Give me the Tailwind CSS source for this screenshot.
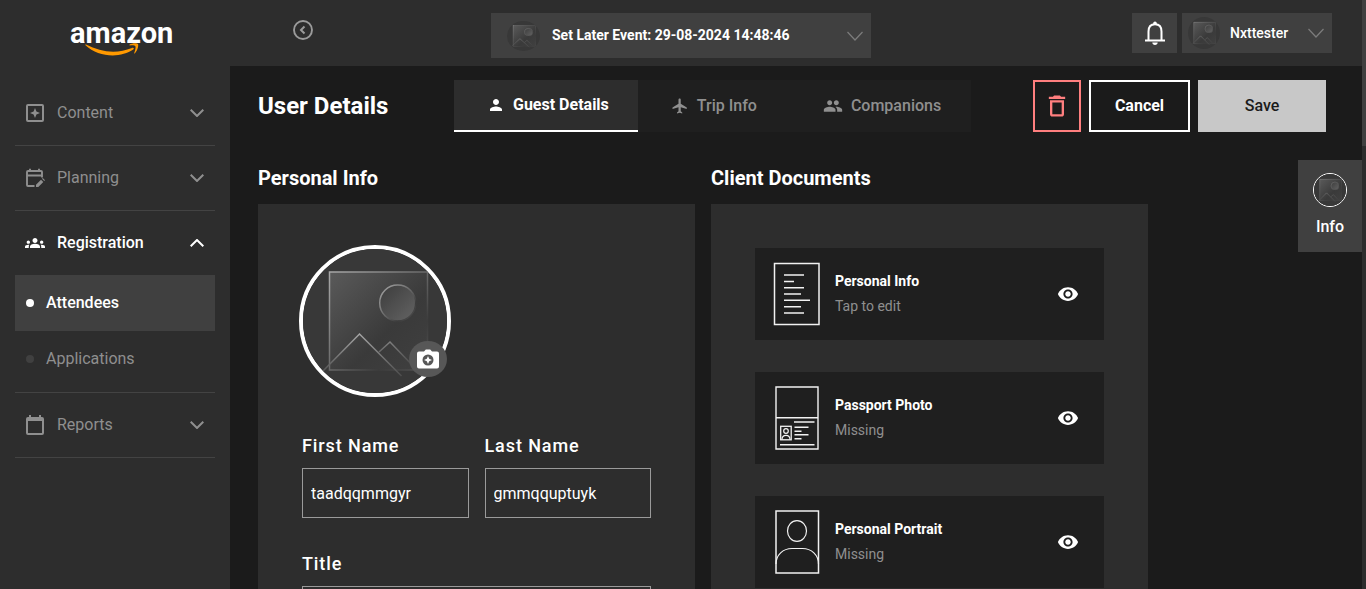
<!DOCTYPE html>
<html lang="en">
<head>
<meta charset="utf-8">
<meta name="viewport" content="width=device-width, initial-scale=1">
<title>User Details</title>
<script src="https://cdn.jsdelivr.net/npm/@tailwindcss/browser@4"></script>
</head>
<body class="bg-[#1b1b1b] font-['Roboto',sans-serif] text-base text-white">

<svg class="absolute size-0" aria-hidden="true">
  <defs>
    <linearGradient id="frame" x1="0" y1="0" x2="1" y2="1"><stop offset="0" stop-color="#5a5a5a"/><stop offset=".6" stop-color="#3a3a3a"/><stop offset="1" stop-color="#404040"/></linearGradient>
    <linearGradient id="edge" x1="0" y1="0" x2="1" y2="1"><stop offset="0" stop-color="#a8a8a8"/><stop offset=".5" stop-color="#686868"/><stop offset=".75" stop-color="#3c3c3c"/><stop offset="1" stop-color="#555"/></linearGradient>
    <linearGradient id="sun" x1="0" y1="0" x2="1" y2="1"><stop offset="0" stop-color="#3c3c3c"/><stop offset="1" stop-color="#646464"/></linearGradient>
    <linearGradient id="peak" gradientUnits="userSpaceOnUse" x1="0" y1="84" x2="0" y2="128"><stop offset="0" stop-color="#a8a8a8"/><stop offset="1" stop-color="#4a4a4a"/></linearGradient>
    <linearGradient id="peak2" gradientUnits="userSpaceOnUse" x1="0" y1="92" x2="0" y2="120"><stop offset="0" stop-color="#808080"/><stop offset="1" stop-color="#404040"/></linearGradient>
  </defs>
  <symbol id="placeholder" viewBox="0 0 144 144">
    <rect width="144" height="144" fill="#383838"/>
    <rect x="26.500" y="23" width="98" height="98" fill="url(#frame)" stroke="url(#edge)" stroke-width="1.500"/>
    <circle cx="94.700" cy="54" r="18" fill="url(#sun)" stroke="url(#edge)" stroke-width="1.500"/>
    <path d="M20 122 56.500 85 98.500 127" fill="none" stroke="url(#peak)" stroke-width="1.500"/>
    <path d="M76 103 87 93 112 119" fill="none" stroke="url(#peak2)" stroke-width="1.500"/>
  </symbol>
  <symbol id="chev" viewBox="0 0 14 8"><path d="M.7.7 7 7l6.300-6.300" fill="none" stroke="currentColor" stroke-width="2"/></symbol>
  <symbol id="thin" viewBox="0 0 16 10"><path d="M.5 1 8 9l7.500-8" fill="none" stroke="currentColor" stroke-width="1.200"/></symbol>
  <symbol id="eye" viewBox="0 0 24 24"><path fill="currentColor" d="M12 4.500C7 4.500 2.730 7.610 1 12c1.730 4.390 6 7.500 11 7.500s9.270-3.110 11-7.500c-1.730-4.390-6-7.500-11-7.500zM12 17c-2.760 0-5-2.240-5-5s2.240-5 5-5 5 2.240 5 5-2.240 5-5 5zm0-8c-1.660 0-3 1.340-3 3s1.340 3 3 3 3-1.340 3-3-1.340-3-3-3z"/></symbol>
</svg>

<div class="flex h-screen overflow-hidden">
  <div class="relative flex min-w-0 flex-1 flex-col">

    <header class="grid h-[66px] shrink-0 grid-cols-[1fr_380px_1fr] items-start bg-[#2d2d2d] pt-[13px]">
      <div class="flex items-start">
        <a href="#" class="flex w-[230px] shrink-0 pt-[10px] pl-[71px]" aria-label="amazon">
          <svg class="h-[34px] w-[102px] overflow-visible" viewBox="0 0 102 34">
            <text x="-1" y="20" font-family="'Roboto',sans-serif" font-weight="700" font-size="29" fill="#fff">amazon</text>
            <g fill="#ff9900">
              <path d="M14.200 22C13.900 21.500 14.500 21.200 15 21.500C30 29.500 46 31 61 25C62.500 24.300 63.500 25.500 62.300 26.500C50 35 28 35 14.200 22Z"/>
              <path d="M58.300 21.800C61 20 66 19.800 67 21C67.800 22.300 66.500 28 63.800 30.400C63.200 30.600 63 30.400 63.200 30C64 27.800 65 24.500 64.400 23.200C63.800 22 60.500 22.200 58.800 22.400Z"/>
            </g>
          </svg>
        </a>
        <button type="button" class="mt-[7px] ml-[63px] text-[#9a9a9a]" aria-label="Collapse menu">
          <svg class="size-5" viewBox="0 0 20 20" fill="none" stroke="currentColor"><circle cx="10" cy="10" r="9" stroke-width="1.900"/><path d="M11.500 6.500 8 10l3.500 3.500" stroke-width="2"/></svg>
        </button>
      </div>

      <div class="flex h-[45px] items-center bg-[#404040] pr-2 pl-4">
        <svg class="h-[30px] w-[33px] shrink-0 rounded-[50%]" preserveAspectRatio="none" viewBox="0 0 144 144"><use href="#placeholder" width="144" height="144"/></svg>
        <select aria-label="Event" class="ml-3 min-w-0 flex-1 appearance-none bg-transparent pb-px text-sm font-bold text-white">
          <option>Set Later Event: 29-08-2024 14:48:46</option>
        </select>
        <svg class="h-[10px] w-4 shrink-0 text-[#7c7c7c]"><use href="#thin"/></svg>
      </div>

      <div class="flex justify-end gap-[5px] pr-[30px]">
        <button type="button" class="flex h-10 w-[45px] items-center justify-center bg-[#404040]" aria-label="Notifications">
          <svg class="h-6 w-5" viewBox="0 0 20 24" fill="none" stroke="#fff"><path d="M3.500 19.500V10.500C3.500 6 6 3.200 10 3.200s6.500 2.800 6.500 7.300V19.500" stroke-width="2"/><path d="M0 19.500h20" stroke-width="2"/><path d="M10 .5a1.800 1.800 0 0 1 1.800 1.800V4H8.200V2.300A1.800 1.800 0 0 1 10 .5zM7.300 21.500h5.400c0 1.500-1.200 2.500-2.700 2.500s-2.700-1-2.700-2.500z" fill="#fff" stroke="none"/></svg>
        </button>
        <button type="button" aria-haspopup="menu" class="flex h-10 w-[150px] items-center bg-[#404040] pr-2 pl-[6px] text-sm font-medium">
          <svg class="size-8 shrink-0 rounded-full"><use href="#placeholder"/></svg>
          <span class="ml-[10px] flex-1 pb-px text-left">Nxttester</span>
          <svg class="h-[10px] w-4 text-[#7c7c7c]"><use href="#thin"/></svg>
        </button>
      </div>
    </header>

    <div class="flex min-h-0 flex-1">
      <nav class="w-[230px] shrink-0 bg-[#2d2d2d] px-[15px] pt-[15px] text-[#8f8f8f]" aria-label="Main">
        <button type="button" class="flex h-[65px] w-full items-center gap-3 border-b border-[#434343] pr-[11px] pl-[10px]">
          <svg class="size-5" viewBox="0 0 20 20"><rect x="2" y="2" width="16" height="16" rx="1" fill="none" stroke="currentColor" stroke-width="2"/><path d="M10 5l1.400 3.600L15 10l-3.600 1.400L10 15l-1.400-3.600L5 10l3.600-1.400z" fill="currentColor"/></svg>
          <span class="flex-1 text-left">Content</span>
          <svg class="h-2 w-[14px]"><use href="#chev"/></svg>
        </button>
        <button type="button" class="flex h-[65px] w-full items-center gap-3 border-b border-[#434343] pr-[11px] pl-[10px]">
          <svg class="size-5" viewBox="0 0 20 20" fill="none" stroke="currentColor"><path d="M9.500 18H3a1 1 0 0 1-1-1V4a1 1 0 0 1 1-1h13a1 1 0 0 1 1 1v5.500M2 7.500h15M5 .8V3m9-2.200V3" stroke-width="1.900"/><path d="M11 19v-2.300l5-5 2.300 2.300-5 5zM17 10.800l.8-.8 2.200 2.200-.8.800z" fill="currentColor" stroke="none"/></svg>
          <span class="flex-1 text-left">Planning</span>
          <svg class="h-2 w-[14px]"><use href="#chev"/></svg>
        </button>
        <div class="border-b border-[#434343] pb-[5px]">
          <button type="button" aria-expanded="true" class="flex h-16 w-full items-center gap-3 pr-[11px] pl-[10px] font-medium text-white">
            <svg class="size-5" viewBox="0 0 24 24" fill="currentColor"><path d="M12 12.750c1.630 0 3.070.39 4.240.9 1.080.48 1.760 1.560 1.760 2.730V18H6v-1.610c0-1.180.68-2.260 1.760-2.730 1.170-.52 2.610-.91 4.240-.91zM4 13c1.100 0 2-.9 2-2s-.9-2-2-2-2 .9-2 2 .9 2 2 2zm1.130 1.100c-.37-.06-.74-.1-1.130-.1-.99 0-1.930.21-2.780.58C.48 14.900 0 15.620 0 16.430V18h4.500v-1.610c0-.83.23-1.610.63-2.290zM20 13c1.100 0 2-.9 2-2s-.9-2-2-2-2 .9-2 2 .9 2 2 2zm4 3.430c0-.81-.48-1.530-1.220-1.850-.85-.37-1.790-.58-2.780-.58-.39 0-.76.04-1.130.1.400.68.630 1.460.630 2.290V18H24v-1.570zM12 6c1.660 0 3 1.340 3 3s-1.340 3-3 3-3-1.340-3-3 1.340-3 3-3z"/></svg>
            <span class="flex-1 text-left">Registration</span>
            <svg class="h-2 w-[14px] rotate-180"><use href="#chev"/></svg>
          </button>
          <a href="#" class="flex h-14 items-center gap-3 bg-[#404040] pl-[11px] font-medium text-white"><span class="size-2 rounded-full bg-white"></span>Attendees</a>
          <a href="#" class="flex h-14 items-center gap-3 pl-[11px]"><span class="size-2 rounded-full bg-[#404040]"></span>Applications</a>
        </div>
        <button type="button" class="flex h-[65px] w-full items-center gap-3 border-b border-[#434343] pr-[11px] pl-[10px]">
          <svg class="size-5" viewBox="0 0 20 20"><path d="M3 2h1V0h2v2h8V0h2v2h1a2 2 0 0 1 2 2v14a2 2 0 0 1-2 2H3a2 2 0 0 1-2-2V4a2 2 0 0 1 2-2zm0 4v12h14V6z" fill="currentColor" fill-rule="evenodd"/></svg>
          <span class="flex-1 text-left">Reports</span>
          <svg class="h-2 w-[14px]"><use href="#chev"/></svg>
        </button>
      </nav>

      <main class="min-w-0 flex-1 overflow-y-auto pt-[14px] pr-9 pl-7 [scrollbar-width:none]">
        <div class="flex h-[52px] items-center">
          <h1 class="w-[196px] shrink-0 text-2xl font-bold">User Details</h1>
          <div class="flex h-full bg-[#1f1f1f] font-medium text-[#8f8f8f]" role="tablist">
            <button type="button" role="tab" aria-selected="true" class="flex items-center gap-2 border-b-2 border-white bg-[#2d2d2d] pr-[29px] pl-[33px] font-bold text-white">
              <svg class="size-[18px]" viewBox="0 0 24 24" fill="currentColor"><path d="M12 12c2.210 0 4-1.790 4-4s-1.790-4-4-4-4 1.790-4 4 1.790 4 4 4zm0 2c-2.670 0-8 1.340-8 4v2h16v-2c0-2.660-5.330-4-8-4z"/></svg>Guest Details
            </button>
            <button type="button" role="tab" class="flex items-center gap-2 px-[33px]">
              <svg class="size-[18px]" viewBox="0 0 24 24" fill="currentColor"><path d="M21 16v-2l-8-5V3.500c0-.83-.67-1.500-1.500-1.500S10 2.670 10 3.500V9l-8 5v2l8-2.500V19l-2 1.500V22l3.500-1 3.500 1v-1.500L13 19v-5.500l8 2.500z"/></svg>Trip Info
            </button>
            <button type="button" role="tab" class="flex items-center gap-2 pr-[30px] pl-[33px]">
              <svg class="size-5" viewBox="0 0 24 24" fill="currentColor"><path d="M16 11c1.660 0 2.990-1.340 2.990-3S17.660 5 16 5c-1.660 0-3 1.340-3 3s1.340 3 3 3zm-8 0c1.660 0 2.990-1.340 2.990-3S9.660 5 8 5C6.340 5 5 6.340 5 8s1.340 3 3 3zm0 2c-2.330 0-7 1.170-7 3.500V19h14v-2.500c0-2.330-4.670-3.500-7-3.500zm8 0c-.29 0-.62.02-.97.05 1.160.84 1.970 1.970 1.970 3.450V19h6v-2.500c0-2.330-4.670-3.500-7-3.500z"/></svg>Companions
            </button>
          </div>
          <div class="ml-auto flex h-full gap-2">
            <button type="button" class="flex w-12 items-center justify-center border-2 border-[#ff7f7f] text-[#ff7f7f]" aria-label="Delete">
              <svg class="size-7" viewBox="0 0 24 24" fill="currentColor"><path d="M6 19c0 1.100.9 2 2 2h8c1.100 0 2-.9 2-2V7H6v12zM8 9h8v10H8V9zm7.500-5l-1-1h-5l-1 1H5v2h14V4z"/></svg>
            </button>
            <button type="button" class="w-[101px] border-2 border-white font-bold">Cancel</button>
            <button type="button" class="w-32 bg-[#c8c8c8] font-medium text-[#1b1b1b]">Save</button>
          </div>
        </div>

        <div class="mt-8 grid w-10/12 grid-cols-2 gap-4">
          <section class="flex flex-col">
            <h2 class="mb-3 text-xl font-bold">Personal Info</h2>
            <form class="flex-1 bg-[#2d2d2d] px-11 pt-[41px] pb-11">
              <div class="relative -ml-[3px] size-[152px]">
                <svg class="size-full rounded-full border-4 border-white"><use href="#placeholder"/></svg>
                <button type="button" class="absolute right-1 bottom-5 flex h-9 w-[38px] items-center justify-center rounded-[50%] bg-[#575757]" aria-label="Upload photo">
                  <svg class="h-5 w-[22px]" viewBox="0 0 22 20"><path d="M2 2.500h5L8.800.5h4.400L15 2.500h5a2 2 0 0 1 2 2v13a2 2 0 0 1-2 2H2a2 2 0 0 1-2-2v-13a2 2 0 0 1 2-2z" fill="#fff"/><circle cx="11" cy="11" r="5.500" fill="#575757"/><path d="M11 7l1.200 2.800L15 11l-2.800 1.200L11 15l-1.200-2.800L7 11l2.800-1.200z" fill="#fff"/></svg>
                </button>
              </div>
              <div class="mt-[37px] grid grid-cols-2 gap-4">
                <div>
                  <label for="first" class="block text-lg leading-6 font-medium tracking-wider">First Name</label>
                  <input id="first" value="taadqqmmgyr" class="mt-[10px] h-[50px] w-full border border-[#9a9a9a] bg-transparent px-2">
                </div>
                <div>
                  <label for="last" class="block text-lg leading-6 font-medium tracking-wider">Last Name</label>
                  <input id="last" value="gmmqquptuyk" class="mt-[10px] h-[50px] w-full border border-[#9a9a9a] bg-transparent px-2">
                </div>
              </div>
              <label for="title" class="mt-[34px] block text-lg leading-6 font-medium tracking-wider">Title</label>
              <input id="title" class="mt-[10px] h-[50px] w-full border border-[#9a9a9a] bg-transparent px-2">
            </form>
          </section>

          <section class="flex flex-col">
            <h2 class="mb-3 text-xl font-bold">Client Documents</h2>
            <ul class="flex flex-1 flex-col gap-8 bg-[#2d2d2d] p-11 text-sm leading-[25px]">
              <li class="flex h-[92px] items-center bg-[#1f1f1f] pr-[25px] pl-[18px]">
                <svg class="h-16 w-12" viewBox="0 0 48 64" fill="none" stroke="#f2f2f2"><rect x="1.500" y="1.500" width="44.500" height="61" stroke-width="1.500"/><path d="M11 13h20M11 19.500h10M11 25.700h20M11 32h17M11 38.200h26M11 44.700h17M11 51h20" stroke-width="1.500"/></svg>
                <div class="ml-[14px] flex-1"><p class="font-bold">Personal Info</p><p class="text-[#8f8f8f]">Tap to edit</p></div>
                <button type="button" aria-label="View Personal Info"><svg class="size-[22px]"><use href="#eye"/></svg></button>
              </li>
              <li class="flex h-[92px] items-center bg-[#1f1f1f] pr-[25px] pl-[18px]">
                <svg class="h-16 w-12" viewBox="0 0 48 64" fill="none" stroke="#f2f2f2"><path d="M3 1h42v62H3zM3 31.800h42M21 36h20.500M7 58.800h34.500M21.500 41.300h14M21.500 45.200h7M21.500 48.800h14M21.500 52.800h7" stroke-width="1.400"/><rect x="7.700" y="40.300" width="10.500" height="13.500" stroke-width="1.300"/><circle cx="13" cy="45" r="2.300" stroke-width="1.200"/><path d="M9 53.500c0-5.500 8-5.500 8 0" stroke-width="1.200"/></svg>
                <div class="ml-[14px] flex-1"><p class="font-bold">Passport Photo</p><p class="text-[#8f8f8f]">Missing</p></div>
                <button type="button" aria-label="View Passport Photo"><svg class="size-[22px]"><use href="#eye"/></svg></button>
              </li>
              <li class="flex h-[92px] items-center bg-[#1f1f1f] pr-[25px] pl-[18px]">
                <svg class="h-16 w-12" viewBox="0 0 48 64" fill="none" stroke="#f2f2f2"><rect x="3" y="1" width="42.500" height="62" stroke-width="1.500"/><ellipse cx="24" cy="21" rx="9.500" ry="10.300" stroke-width="1.200"/><path d="M3 54c0-9 7-15.500 16-15.500h10.500C38.500 38.500 45.500 45 45.500 54" stroke-width="1.200"/></svg>
                <div class="ml-[14px] flex-1"><p class="font-bold">Personal Portrait</p><p class="text-[#8f8f8f]">Missing</p></div>
                <button type="button" aria-label="View Personal Portrait"><svg class="size-[22px]"><use href="#eye"/></svg></button>
              </li>
            </ul>
          </section>
        </div>
      </main>
    </div>

    <button type="button" class="absolute top-40 right-0 flex h-[92px] w-16 flex-col items-center justify-center gap-2 bg-[#404040] font-medium">
      <svg class="size-[34px] rounded-full border border-white"><use href="#placeholder"/></svg>
      <span>Info</span>
    </button>
  </div>

  <div class="w-1 shrink-0 bg-[#2d2d2d]" aria-hidden="true"><div class="h-[146px] bg-[#404040]"></div></div>
</div>
</body>
</html>
